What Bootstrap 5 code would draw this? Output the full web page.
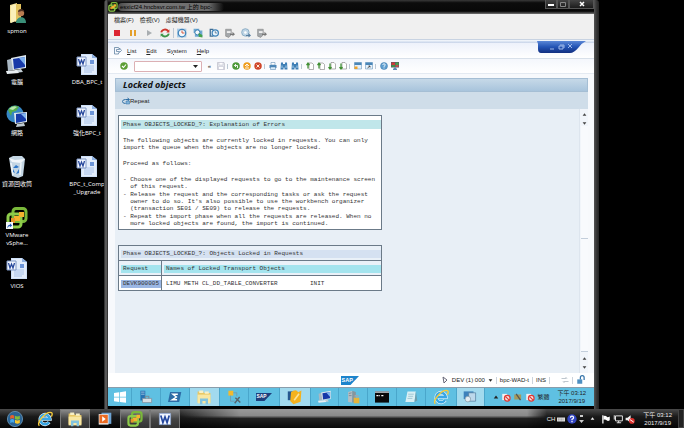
<!DOCTYPE html>
<html lang="zh-Hant">
<head>
<meta charset="utf-8">
<meta name="viewport" content="width=device-width, initial-scale=1">
<title>Locked objects</title>
<link href="https://cdn.jsdelivr.net/npm/bootstrap@5.3.0/dist/css/bootstrap.min.css" rel="stylesheet">
<style>
body{background:#000;color:#222;font:6px/8px "Liberation Sans","Noto Sans CJK TC",sans-serif;overflow:hidden}
button,a.sapm,a.vmm{font:inherit;color:inherit;background:none;border:0;padding:0;text-decoration:none}
svg{display:block;flex:none}
.minh0{min-height:0}
.i8{width:8px;height:8px}.i10{width:10px;height:10px}.i14{width:14px;height:14px}.i16{width:16px;height:16px}.i22{width:22px;height:22px}
/* desktop */
.desk{width:104px;flex:none;display:grid;grid-template-columns:34px 34px;column-gap:36px;grid-auto-rows:51px;padding-top:3px;overflow:hidden;align-content:start}
.dicon{color:#fff;display:flex;flex-direction:column;align-items:center;text-align:center;text-decoration:none;white-space:nowrap;font-family:"Open Sans","Noto Sans CJK TC",sans-serif}
.dicon span{margin-top:2px}
.c1{grid-column:1}.c2{grid-column:2}
/* remote window */
.win{background:linear-gradient(90deg,#222,#6a6a6a 50%,#222) left/4px 100% no-repeat,linear-gradient(90deg,#555,#3a3a3a 40%,#222) right/5px 100% no-repeat,#000;padding:0 5px 3px 4px;min-width:0;margin-right:85px;border-radius:3px 3px 0 0}
.tbar{height:14px;background:linear-gradient(#3a3a3a,#0c0c0c 20%,#080808 80%,#777)}
.tbar .cap{background:linear-gradient(90deg,#4a4a4a,#777 15%,#6c6c6c 85%,#5c5c5c00);border-radius:4px;color:#000;padding:0 12px 0 2px;white-space:nowrap}
.wb button{height:9px;width:12px;border:1px solid #555;border-top:0;background:linear-gradient(#444,#1c1c1c);display:flex;align-items:center;justify-content:center}
.wb button:last-child{width:25px}
.vmbar{background:#f0f0f0;padding-left:6px}
.vmbar.m{height:12px;gap:6px}
.vmbar.t{height:13px;padding-left:1px}
.vmbar.t button{width:16px;display:flex;justify-content:center}
.vmbar.t i,.sapt i{width:1px;height:10px;background:#bcc8d4;margin:0}
.strip{height:4px;background:linear-gradient(#a9b9cf,#f4f7fc 30%,#dfe7f4 60%,#c6d2e8)}
.sapmenu{height:16px;background:linear-gradient(#edf1fb,#fff);padding-left:6px;gap:10px;border-bottom:1px solid #d8e0ea}
.sapmenu svg{margin-right:-5px}
.sapt{height:15px;background:linear-gradient(#f4f7fc,#fff);padding-left:10px;border-bottom:1px solid #e4eaf2}
.sapt button{width:11px;display:flex;justify-content:center}
.sapt i{margin:0 2px 0 1px;height:5px}
.cmd{width:68px;height:11px;border:1px solid #dcb0b4;background:#fff;margin:0 2px 0 5px;font:inherit;padding:0 3px;appearance:none;border-radius:1px}
.cmdbox{position:relative}
.cmdbox svg{position:absolute;right:6px;top:4px}
.body1{background:#f7f9fc;padding:4px 6px 0 7px}
.ttl{height:14px;background:linear-gradient(#c6d9e8,#a8c4dc);border:1px solid #a5bed4;font:italic 700 9px/12px "Open Sans",sans-serif;color:#111;padding-left:7px;margin:0}
.app{height:17px;background:#cfdde9;padding-left:7px}
.content{background:#e8eff6;min-height:0}
.mono{font:6px/7px "Liberation Mono",monospace;color:#333;white-space:pre}
.msg{width:57%;border:1px solid #6b7a88;background:#fff;padding:4px 0 1px 2px;margin:6px 0 15px 3px}
.msg h2{font:inherit;line-height:9px;background:#c0e6ea;margin:0 0 8px;padding-left:2px}
.msg p,.msg ul{margin:0 0 9px;padding-left:2px}
.msg ul{list-style:none;margin:0}
.msg li{margin-bottom:1px}
.obj{width:57%;margin-left:3px;border-collapse:collapse;background:#fff}
.obj th,.obj td{font-weight:400;border:1px solid #6b7a88;height:15px;padding:1px 0 0 2px;background:#eaf1f8;text-align:left}
.obj span{display:block;line-height:8px;padding-left:2px}
.obj .hb{background:#d5e1f1}.obj .hc{background:#a4e4ee}.obj .sel{background:#9bb7e4}
.obj td{background:#fff}
.obj tr>*:first-child:not([colspan]){width:43px}
.sbar{width:9px;background:#f1f5fa;border-left:1px solid #dde5ee;padding:3px 0;color:#444}
.thumb{border:1px solid #c3cedb;border-width:0 0 1px;background:#f8fafd;width:7px}
.stat{height:14px;background:#fff;color:#222}
.stat i{width:1px;height:7px;background:#ccd3dc}
.stat .sinfo{gap:3px}
.tabs-blue{position:absolute;right:13px;top:41px}
.itask{height:19px;background:#5fc0e2;border-top:1px solid #8a9dab}
.itask button{height:18px;display:flex;align-items:center;justify-content:center;border-right:1px solid #4aa6cb}
.itask .winb{width:24px}
.itask .on{background:#a2daee}
.tray{gap:2px}
.clock{text-align:center;line-height:8px;white-space:nowrap}
.itask .clock{margin:0 8px}
.otask .clock{margin:0 6px 0 8px}
.otask{height:19px;background:linear-gradient(#4a4a4a,#1a1a1a 40%,#050505);color:#eee}
.otask .glass{align-self:stretch;background:linear-gradient(#9a9a9a,#8a8a8a 35%,#222 50%,#0a0a0a);-webkit-mask:linear-gradient(90deg,#0000,#000 60px calc(100% - 20px),#0000)}
.otask button{width:30px;height:19px;display:flex;align-items:center;justify-content:center}
.otask button.on{background:linear-gradient(#888,#444 50%,#333);border:1px solid #777;border-width:1px 1px 0}
.edge{width:6px;align-self:stretch;border:1px solid #444;background:#222}
</style>
<script src="https://cdn.jsdelivr.net/npm/bootstrap@5.3.0/dist/js/bootstrap.bundle.min.js"></script>
</head>
<body class="d-flex flex-column vh-100">
<svg width="0" height="0" class="position-absolute" aria-hidden="true"><defs>
<symbol id="folder" viewBox="0 0 22 22"><path d="M4 2l7-2v17l-7 3z" fill="#f5e39a"/><path d="M9 1h6v15l-6 3z" fill="#e3c35e"/><path d="M5 3l5-2v17l-5 2z" fill="#fbf0b8"/><circle cx="15" cy="10" r="3.2" fill="#b87c50"/><path d="M12 9c0-4 6-4 6 0l-2-1z" fill="#4d3020"/><path d="M10 20c0-7 10-8 10 0z" fill="#3a8f78"/></symbol>
<symbol id="pc" viewBox="0 0 22 22"><path d="M1 6l7-2v12l-6 1z" fill="#a9b7c2"/><path d="M5 4l15-3v13L7 16z" fill="#dde7ee"/><path d="M7 5l12-2v10L8 15z" fill="#1638a8"/><path d="M13 4l6-1v8z" fill="#7fb2f0"/><path d="M9 16l6-1 2 3-9 1z" fill="#c3cdd4"/><path d="M0 17l11-1 2 3-12 1z" fill="#e8eef2"/></symbol>
<symbol id="net" viewBox="0 0 22 22"><circle cx="9" cy="9" r="8.5" fill="#3687c4"/><path d="M2 5c3-5 8-5 11-3l-3 4-4 1-1 4zM9 9l5-2 2 5-4 5z" fill="#55ad4c"/><path d="M3 4q4-4 8-2l-4 3z" fill="#b8e6ae"/><path d="M8 8l13-1v10l-12 2z" fill="#dbe6ee"/><path d="M10 9l10-1v8l-10 2z" fill="#173ca8"/><path d="M15 9l5-1v6z" fill="#83b6ef"/><path d="M11 19l7-1 1 3-9 1z" fill="#bfcbd2"/></symbol>
<symbol id="bin" viewBox="0 0 22 22"><path d="M3 2l4-2 9 0 3 3-2 17-5 2-6-2z" fill="#c4d6e4"/><path d="M3 2l6 2 10-1-4 4-9-1z" fill="#f1f6fa"/><path d="M5 7l2 12M15 7l-1 12" stroke="#eef5fa" stroke-width="1.5"/><path d="M7 12l3-3 3 2-2 1zM13 13v4l-3 1zM7 13l2 4-2-1z" fill="#2f77c8"/></symbol>
<symbol id="doc" viewBox="0 0 22 22"><path d="M5 0h11l5 4v17H5z" fill="#cfe0f7"/><path d="M6 1h9l5 4v15H6z" fill="#e3edfb"/><path d="M16 0l5 4h-5z" fill="#8eb0e0"/><path d="M8 12h10M8 14h10M8 16h10M8 18h8" stroke="#9cb8e4" stroke-width=".8"/><path d="M14 6h4v4h-4z" fill="#6d95d8"/><path d="M1 3h9v9H1z" fill="#f6f9ff" stroke="#7d95c4"/><path d="M2.500 5l1.500 5 1.500-4 1.500 4 1.500-5" fill="none" stroke="#27489c" stroke-width="1.300"/></symbol>
<symbol id="vm" viewBox="0 0 22 22"><rect x="7" y="1.500" width="13" height="13" rx="3" fill="none" stroke="#79b83a" stroke-width="3"/><rect x="2" y="7" width="13" height="13" rx="3" fill="none" stroke="#8dcb4a" stroke-width="3"/><path d="M8 9h5V5h5v5h-4v4H8z" fill="#f4b22e"/><path d="M5 11h4v5H5z" fill="#e3962a"/></symbol>
<symbol id="cut" viewBox="0 0 8 8"><path d="M0 0h8v8H0z" fill="#f4f8fb"/><path d="M1.500 7q0-4 3-4V1.500L7 4 4.500 6V4.500Q3 4.500 1.500 7z" fill="#1d54b4"/></symbol>
<symbol id="ok" viewBox="0 0 16 16"><circle cx="8" cy="8" r="7.500" fill="#5c9e35"/><path d="M4 8l3 3 5-6" fill="none" stroke="#fff" stroke-width="2.200"/></symbol>
<symbol id="back" viewBox="0 0 16 16"><circle cx="8" cy="8" r="7.500" fill="#4f9a3b"/><path d="M11 12V7H5m3-3L5 7l3 3" fill="none" stroke="#fff" stroke-width="1.800"/></symbol>
<symbol id="exit" viewBox="0 0 16 16"><circle cx="8" cy="8" r="7.500" fill="#ef9d1d"/><path d="M4 8l4-4 4 4M8 5v5M4 12h8" fill="none" stroke="#fff" stroke-width="1.800"/></symbol>
<symbol id="cancel" viewBox="0 0 16 16"><circle cx="8" cy="8" r="7.500" fill="#cf4528"/><path d="M5 5l6 6M11 5l-6 6" stroke="#ffe9d8" stroke-width="2"/></symbol>
<symbol id="print" viewBox="0 0 16 16"><path d="M4 1h8v5H4z" fill="#fff" stroke="#4a7ca8"/><path d="M1 6h14v6H1z" fill="#4d87b8"/><path d="M3 10h10v5H3z" fill="#d9ebf8" stroke="#4a7ca8"/></symbol>
<symbol id="find" viewBox="0 0 16 16"><path d="M2 1h4v3h4V1h4l1 14H9v-4H7v4H1z" fill="#3f7fb5"/><path d="M3 7h2v5H3zM11 7h2v5h-2z" fill="#a8d0ee"/></symbol>
<symbol id="page" viewBox="0 0 16 16"><path d="M6 2h6l3 3v10H6z" fill="#fff" stroke="#666"/><path d="M4 13V3M1 6l3-4 3 4" fill="none" stroke="#3f8f32" stroke-width="2.500"/></symbol>
<symbol id="paged" viewBox="0 0 16 16"><path d="M6 1h6l3 3v10H6z" fill="#fff" stroke="#666"/><path d="M4 3v10M1 10l3 4 3-4" fill="none" stroke="#3f8f32" stroke-width="2.500"/></symbol>
<symbol id="winA" viewBox="0 0 16 16"><path d="M1 1h14v13H1z" fill="#e4f0fa" stroke="#5589b4"/><path d="M1 1h14v5H1z" fill="#4a86b8"/><path d="M1 9h6v5H1z" fill="#f2a326"/></symbol>
<symbol id="winB" viewBox="0 0 16 16"><path d="M1 1h14v13H1z" fill="#e4f0fa" stroke="#5589b4"/><path d="M1 1h14v5H1z" fill="#4a86b8"/><path d="M5 12l5-4M7 8h3v3" fill="none" stroke="#333" stroke-width="1.500"/></symbol>
<symbol id="help" viewBox="0 0 16 16"><circle cx="8" cy="8" r="7" fill="#5f9fd0" stroke="#3b77a8"/><path d="M5.500 6q0-2.500 2.500-2.500T10.500 6Q10.500 7.500 8 8.500V10M8 11v2" fill="none" stroke="#fff" stroke-width="1.600"/></symbol>
<symbol id="mon" viewBox="0 0 16 16"><path d="M0 0h16v11H0z" fill="#556"/><path d="M1 1h7v5H1z" fill="#d03a38"/><path d="M9 1h6v5H9z" fill="#49a04c"/><path d="M1 6h7v4H1z" fill="#3e8e48"/><path d="M9 6h6v4H9z" fill="#c0504a"/><path d="M6 11h4v2h2v3H4v-3h2z" fill="#5d8ab2"/></symbol>
<symbol id="save" viewBox="0 0 16 16"><path d="M1 1h13l1 2v12H1z" fill="#e5e8eb" stroke="#aab"/><path d="M4 1h8v5H4zM3 9h10v6H3z" fill="#fff" stroke="#bbc"/></symbol>
<symbol id="clk" viewBox="0 0 16 16"><path d="M0 1h15v14H0z" fill="#a8cbe6"/><circle cx="8" cy="8" r="6" fill="#f2f8fc" stroke="#3f83b8" stroke-width="2"/><path d="M8 4v4h4" fill="none" stroke="#d45034" stroke-width="1.500"/></symbol>
<symbol id="gear" viewBox="0 0 16 16"><path d="M1 1h9v3h5v10H3V8H1z" fill="#6fa9d2"/><circle cx="7" cy="7" r="4" fill="#f2f8fc" stroke="#387cae" stroke-width="1.500"/><path d="M9 14V8l6 3v4z" fill="#44a14a"/></symbol>
<symbol id="snap" viewBox="0 0 16 16"><path d="M2 1v13M1 2h6M1 13h6" fill="none" stroke="#3f6d94" stroke-width="2"/><circle cx="10" cy="8" r="5" fill="#eaf5fc" stroke="#3f83b8" stroke-width="2"/><path d="M10 5v3h3" fill="none" stroke="#335577"/></symbol>
<symbol id="dev" viewBox="0 0 16 16"><path d="M1 2h9v9l-4 4-5-2z" fill="#a4a8ab" stroke="#888"/><path d="M3 5h6v3H3z" fill="#eee"/><path d="M8 9h4V6l4 4-4 3v-2H8z" fill="#777"/></symbol>
<symbol id="cd" viewBox="0 0 16 16"><circle cx="7" cy="7" r="6" fill="#bdd4e5" stroke="#6d96b4"/><circle cx="7" cy="7" r="2" fill="#fff"/><path d="M8 11h4V8l4 4-4 3v-2H8z" fill="#567ea0"/></symbol>
<symbol id="re" viewBox="0 0 16 16"><path d="M2 7a6 5.500 0 0 1 11-2" fill="none" stroke="#cd362c" stroke-width="3"/><path d="M14 9a6 5.500 0 0 1-11 2" fill="none" stroke="#3d9649" stroke-width="3"/><path d="M15 2v5h-5z" fill="#cd362c"/><path d="M1 14V9h5z" fill="#3d9649"/></symbol>
<symbol id="expl" viewBox="0 0 20 20"><path d="M2 3h7l1 2h8v12H2z" fill="#e8c866"/><path d="M4 2h5v3H4zM11 3h5v3h-5z" fill="#f7f0c8"/><path d="M2 7h16v11H2z" fill="#f8e7a2"/><path d="M5 19v-7h10v7h-3v-4H8v4z" fill="#82c4df"/></symbol>
<symbol id="ie" viewBox="0 0 20 20"><path d="M15 14a6 6 0 1 1 1-4H5" fill="none" stroke="#eaf7fd" stroke-width="4.600"/><path d="M15 14a6 6 0 1 1 1-4H5" fill="none" stroke="#38a6e4" stroke-width="3"/><path d="M3 18.500C-1 15 11 0 18 2q2 1 0 5" fill="none" stroke="#f6cc3a" stroke-width="1.700"/></symbol>
<symbol id="sap" viewBox="0 0 36 18"><path d="M0 0h36L19 18H0z" fill="#1c84cc"/><text x="1" y="12" font-family="Liberation Sans" font-weight="700" font-size="11" fill="#fff">SAP</text></symbol>
<symbol id="word" viewBox="0 0 20 20"><path d="M2 2h16v16H2z" fill="#f0f5ff" stroke="#8da7d8"/><path d="M4 5l3 10 3-8 3 8 3-10" fill="none" stroke="#24479e" stroke-width="2.400"/></symbol>
<symbol id="lockp" viewBox="0 0 16 16"><path d="M7 7V4q0-3 3-3t3 3v4" fill="none" stroke="#3674a9" stroke-width="2"/><path d="M2 7h8v7H2z" fill="#4e8fc1"/></symbol>
<symbol id="noo" viewBox="0 0 16 16"><path d="M2 3h8v10H2z" fill="#f2f2f2"/><circle cx="10" cy="10" r="4.500" fill="#f6e4e2" stroke="#e13a35" stroke-width="2"/><path d="M7 7l6 6" stroke="#e13a35" stroke-width="2"/></symbol>
<symbol id="up" viewBox="0 0 8 8"><path d="M1 6l3-4 3 4z" fill="currentColor"/></symbol>
<symbol id="dn" viewBox="0 0 8 8"><path d="M1 2l3 4 3-4z" fill="currentColor"/></symbol>
</defs></svg>

<main class="d-flex flex-grow-1 minh0">
<nav class="desk" aria-label="桌面">
<a class="dicon c1" href="#"><svg class="i22"><use href="#folder"/></svg><span>spmon</span></a>
<a class="dicon c1" href="#"><svg class="i22"><use href="#pc"/></svg><span>電腦</span></a>
<a class="dicon c2" href="#"><svg class="i22"><use href="#doc"/></svg><span>DBA_BPC_t</span></a>
<a class="dicon c1" href="#"><svg class="i22"><use href="#net"/></svg><span>網路</span></a>
<a class="dicon c2" href="#"><svg class="i22"><use href="#doc"/></svg><span>強化BPC_t</span></a>
<a class="dicon c1" href="#"><svg class="i22"><use href="#bin"/></svg><span>資源回收筒</span></a>
<a class="dicon c2" href="#"><svg class="i22"><use href="#doc"/></svg><span>BPC_t_Comp<br>_Upgrade</span></a>
<a class="dicon c1" href="#"><svg class="i22" viewBox="0 0 22 22"><use href="#vm" width="22" height="22"/><use href="#cut" y="15" width="7" height="7"/></svg><span>VMware<br>vSphe...</span></a>
<a class="dicon c1" href="#"><svg class="i22"><use href="#doc"/></svg><span>VIOS</span></a>
</nav>

<section class="win flex-grow-1 d-flex flex-column position-relative">
<header class="tbar d-flex align-items-center flex-shrink-0"><svg class="i10"><use href="#vm"/></svg><span class="cap">esxicf24.hncbsvr.com.tw 上的 bpc-</span>
<div class="wb d-flex ms-auto align-self-start"><button aria-label="Minimize"><svg width="6" height="4"><path d="M0 2h6v2H0z" fill="#fff"/></svg></button><button aria-label="Maximize"><svg width="6" height="5"><path d="M.5.500h5v4h-5z" fill="none" stroke="#888"/></svg></button><button aria-label="Close"><svg width="6" height="6"><path d="M1 1l4 4M5 1l-4 4" stroke="#fff" stroke-width="1.500"/></svg></button></div></header>
<div class="vmbar m d-flex align-items-center flex-shrink-0"><a class="vmm" href="#">檔案(F)</a><a class="vmm" href="#">檢視(V)</a><a class="vmm" href="#">虛擬機器(V)</a></div>
<div class="vmbar t d-flex align-items-center flex-shrink-0">
<button aria-label="Stop"><svg class="i8"><path d="M1 1h6v6H1z" fill="#dc2632"/></svg></button><button aria-label="Pause"><svg class="i8"><path d="M1 1h2v6H1zM5 1h2v6H5z" fill="#e4a02c"/></svg></button><button aria-label="Play"><svg class="i8"><path d="M2 1l5 3-5 3z" fill="#a9aeb1"/></svg></button><button aria-label="Restart"><svg class="i10"><use href="#re"/></svg></button><i></i>
<button aria-label="Snapshot"><svg class="i10"><use href="#clk"/></svg></button><button aria-label="Revert"><svg class="i10"><use href="#gear"/></svg></button><button aria-label="Manage"><svg class="i10"><use href="#snap"/></svg></button><button aria-label="Floppy"><svg class="i10"><use href="#dev"/></svg></button><button aria-label="CD"><svg class="i10"><use href="#cd"/></svg></button><button aria-label="USB"><svg class="i10"><use href="#dev"/></svg></button></div>
<div class="strip flex-shrink-0"></div>
<div class="sapmenu d-flex align-items-center flex-shrink-0"><svg class="i8" viewBox="0 0 16 16"><path d="M9 3V1H1v13h8v-3M5 5h6V2l4 5-4 4V9H5z" fill="none" stroke="#5b7d9d" stroke-width="1.500"/></svg>
<a class="sapm" href="#"><u>L</u>ist</a><a class="sapm" href="#"><u>E</u>dit</a><a class="sapm" href="#">S<u>y</u>stem</a><a class="sapm" href="#"><u>H</u>elp</a></div>
<div class="sapt d-flex align-items-center flex-shrink-0"><button aria-label="Enter"><svg class="i8"><use href="#ok"/></svg></button>
<div class="cmdbox"><input class="cmd d-block" type="text" aria-label="Command"><svg width="5" height="4"><path d="M0 0h5L2.500 3z" fill="#222"/></svg></div>
<button aria-label="Collapse">«</button><button aria-label="Save"><svg class="i8"><use href="#save"/></svg></button><i></i>
<button aria-label="Back"><svg class="i8"><use href="#back"/></svg></button><button aria-label="Exit"><svg class="i8"><use href="#exit"/></svg></button><button aria-label="Cancel"><svg class="i8"><use href="#cancel"/></svg></button><i></i>
<button aria-label="Print"><svg class="i8"><use href="#print"/></svg></button><button aria-label="Find"><svg class="i8"><use href="#find"/></svg></button><button aria-label="Find next"><svg class="i8"><use href="#find"/></svg></button><i></i>
<button aria-label="First page"><svg class="i8"><use href="#page"/></svg></button><button aria-label="Previous page"><svg class="i8"><use href="#page"/></svg></button><button aria-label="Next page"><svg class="i8"><use href="#paged"/></svg></button><button aria-label="Last page"><svg class="i8"><use href="#paged"/></svg></button><i></i>
<button aria-label="New session"><svg class="i8"><use href="#winA"/></svg></button><button aria-label="Shortcut"><svg class="i8"><use href="#winB"/></svg></button><i></i>
<button aria-label="Help"><svg class="i8"><use href="#help"/></svg></button><button aria-label="Layout"><svg class="i8"><use href="#mon"/></svg></button></div>
<svg class="tabs-blue" width="49" height="13"><defs><linearGradient id="bg" x2="0" y2="1"><stop stop-color="#5a86d6"/><stop offset=".5" stop-color="#2353b4"/><stop offset="1" stop-color="#122f80"/></linearGradient></defs><path d="M0 0h49q-4 2-7 6-5 6-9 6H4q-3 0-3-4V3z" fill="url(#bg)"/><path d="M13 8h4M22 5h4v3h-4zM23 4h4v3M31 3l4 4M35 3l-4 4" fill="none" stroke="#9fb9ea"/></svg>
<div class="body1 flex-grow-1 d-flex flex-column minh0">
<h1 class="ttl flex-shrink-0">Locked objects</h1>
<div class="app d-flex align-items-center flex-shrink-0"><button class="d-flex align-items-center"><svg class="i8" viewBox="0 0 16 16"><path d="M14 5H7q-6 0-6 4t6 4M11 2l4 3-4 3" fill="none" stroke="#2e6ea4" stroke-width="2"/><path d="M8 8h7v6H8z" fill="#7fb1d8" stroke="#2e6ea4"/></svg>Repeat</button></div>
<div class="content flex-grow-1 d-flex"><div class="flex-grow-1">
<article class="msg mono"><h2>Phase OBJECTS_LOCKED_?: Explanation of Errors</h2><p>The following objects are currently locked in requests. You can only
import the queue when the objects are no longer locked.</p><p>Proceed as follows:</p><ul><li>- Choose one of the displayed requests to go to the maintenance screen
  of this request.</li><li>- Release the request and the corresponding tasks or ask the request
  owner to do so. It's also possible to use the workbench organizer
  (transaction SE01 / SE09) to release the requests.</li><li>- Repeat the import phase when all the requests are released. When no
  more locked objects are found, the import is continued.</li></ul></article>
<table class="obj mono"><thead><tr><th colspan="2"><span class="hb">Phase OBJECTS_LOCKED_?: Objects Locked in Requests</span></th></tr><tr><th><span class="hc">Request</span></th><th><span class="hc">Names of Locked Transport Objects</span></th></tr></thead><tbody><tr><td><span class="sel">DEVK900005</span></td><td><span>LIMU METH CL_DD_TABLE_CONVERTER         INIT</span></td></tr></tbody></table>
</div>
<div class="sbar d-flex flex-column align-items-center"><svg width="5" height="5"><use href="#up"/></svg><svg class="mt-1" width="5" height="5"><use href="#dn"/></svg><div class="thumb flex-fill"></div><div class="thumb flex-fill mb-1"></div><svg width="5" height="5"><use href="#up"/></svg><svg class="mt-1" width="5" height="5"><use href="#dn"/></svg></div></div>
</div>
<footer class="stat d-flex align-items-center flex-shrink-0"><div class="col-6 ms-2 d-flex justify-content-end"><svg width="18" height="9"><use href="#sap"/></svg></div>
<div class="sinfo d-flex align-items-center ms-auto text-nowrap pe-2"><svg class="i8" viewBox="0 0 8 8"><path d="M2 1l4 3-3 3z" fill="none" stroke="#667"/></svg><span>DEV (1) 000</span><svg width="5" height="5"><use href="#dn"/></svg><i></i><span>bpc-WAD-t</span><i></i><span>INS</span><i class="me-2"></i><svg class="i8" viewBox="0 0 16 16"><path d="M1 5h10M5 11h10M9 2l3 3M7 14l-3-3" stroke="#aab4be" stroke-width="1.500"/></svg><i></i><svg class="i10"><use href="#lockp"/></svg></div></footer>
<div class="itask d-flex align-items-center flex-shrink-0">
<button class="winb" aria-label="Start"><svg width="12" height="12" viewBox="0 0 16 16"><path d="M0 2.500l7-1v6H0zM8 1.500l8-1.200v7.200H8zM0 8.500h7v6l-7-1zM8 8.500h8v7.200L8 14.500z" fill="#fff"/></svg></button>
<button class="flex-fill" aria-label="Server Manager"><svg class="i14" viewBox="0 0 20 20"><path d="M2 1h7v14H2z" fill="#2673b4"/><path d="M3 3h5M3 6h5" stroke="#cde"/><path d="M5 12h13v6H5z" fill="#d6dee4" stroke="#7b8b98"/><path d="M9 12v-3h5v3" fill="none" stroke="#7b8b98" stroke-width="1.500"/></svg></button>
<button class="flex-fill" aria-label="PowerShell"><svg class="i14" viewBox="0 0 20 20"><path d="M3 3h16l-3 14H0z" fill="#2c6ca6"/><path d="M14 6H7l5 4-6 4h7" fill="none" stroke="#fff" stroke-width="2"/></svg></button>
<button class="flex-fill on" aria-label="Explorer"><svg class="i16"><use href="#expl"/></svg></button>
<button class="flex-fill" aria-label="Configuration"><svg class="i14" viewBox="0 0 20 20"><path d="M2 1h7v7H2z" fill="#f3b92f"/><path d="M5 8v8h6M9 4h5v5" fill="none" stroke="#7b909e"/><path d="M12 11l7 7M18 10l-7 9" stroke="#57646d" stroke-width="2"/></svg></button>
<button class="flex-fill" aria-label="SAP Logon"><svg width="16" height="8" viewBox="0 0 36 18"><path d="M0 0h36L19 18H0z" fill="#1d3f7c"/><text x="1" y="12" font-family="Liberation Sans" font-weight="700" font-size="11" fill="#fff">SAP</text></svg></button>
<button class="flex-fill on" aria-label="SAP GUI"><svg class="i16" viewBox="0 0 20 20"><path d="M1 3h9v11H1z" fill="#26588f"/><path d="M5 4q6-5 9 0l4-2-1 14-9 3-4-4z" fill="#f4b21d"/><path d="M9 14l6-8" stroke="#fbe39a" stroke-width="2"/></svg></button>
<button class="flex-fill" aria-label="Computer"><svg class="i14"><use href="#pc"/></svg></button>
<button class="flex-fill" aria-label="Services"><svg class="i14" viewBox="0 0 20 20"><path d="M3 3l6-2v17l-6-1z" fill="#b6bec3"/><path d="M9 1l5 2v15H9z" fill="#87949b"/><path d="M4 5l4-1M4 8h4" stroke="#678"/><path d="M11 11h8v8h-8z" fill="#e5b53c"/><path d="M13 11V8h4v3" fill="none" stroke="#9ea8ad" stroke-width="1.500"/></svg></button>
<button class="flex-fill" aria-label="Command Prompt"><svg class="i14" viewBox="0 0 20 16"><path d="M0 0h20v16H0z" fill="#090909"/><path d="M0 0h20v2H0z" fill="#c9ced2"/><path d="M2 6h3M6 6h1M9 6h3" stroke="#fff" stroke-width="1.500"/></svg></button>
<button class="flex-fill" aria-label="Notepad"><svg class="i14" viewBox="0 0 20 20"><path d="M5 2h12l-2 15H2z" fill="#daf0f5"/><path d="M17 2l2 13-4 2z" fill="#6d9ead"/><path d="M6 6h8M6 9h7M5 12h7" stroke="#88b7c6"/></svg></button>
<button class="flex-fill" aria-label="Internet Explorer"><svg class="i16"><use href="#ie"/></svg></button>
<button class="flex-fill on" aria-label="Control Panel"><svg class="i14" viewBox="0 0 20 20"><path d="M1 2h14v11H1z" fill="#3d82bb"/><path d="M8 4h10v12H8z" fill="#bdd8eb" stroke="#517c9e"/><circle cx="7" cy="13" r="4" fill="#e4edf2" stroke="#7e96a5"/></svg></button>
<div class="tray d-flex align-items-center ms-2"><svg width="6" height="6"><use href="#up"/></svg><svg class="i10"><use href="#noo"/></svg><svg class="i10" viewBox="0 0 16 16"><path d="M2 4h11v8H2z" fill="#a59a5c"/><path d="M5 3l7 10" stroke="#555" stroke-width="2"/></svg><svg class="i10"><use href="#noo"/></svg><span class="text-nowrap">繁體</span></div><div class="clock">下午 03:12<br>2017/9/19</div></div>
</section>
</main>

<footer class="otask d-flex align-items-center flex-shrink-0">
<button aria-label="開始" class="me-n1"><svg class="i16" viewBox="0 0 20 20"><circle cx="10" cy="10" r="9.500" fill="#2b6393" stroke="#6d9bbc"/><path d="M4 6q3-2 5 0v4q-2-2-5 0z" fill="#e9602c"/><path d="M10 6q3 2 6 0v4q-3 2-6 0z" fill="#83bd35"/><path d="M4 11q3-2 5 0v4q-2-2-5 0z" fill="#47a8e8"/><path d="M10 11q3 2 6 0v4q-3 2-6 0z" fill="#f8c82e"/></svg></button>
<button aria-label="Internet Explorer"><svg class="i16"><use href="#ie"/></svg></button><button class="on" aria-label="檔案總管"><svg class="i16"><use href="#expl"/></svg></button><button aria-label="Media Player"><svg class="i14" viewBox="0 0 20 20"><path d="M5 1h14v16H5z" fill="#6ea3d2"/><path d="M1 3h14v15H1z" fill="#efefef"/><path d="M2 4h12v12H2z" fill="#ea6a22"/><path d="M6 6l5 4-5 4z" fill="#fff"/></svg></button><button class="on" aria-label="vSphere"><svg class="i16"><use href="#vm"/></svg></button><button class="on" aria-label="Word"><svg class="i14"><use href="#word"/></svg></button>
<div class="glass flex-grow-1"></div>
<div class="tray d-flex align-items-center"><span>CH</span><svg class="i8" viewBox="0 0 16 16"><path d="M0 5h16v8H0z" fill="#ddd"/><path d="M2 8h12M2 10h12" stroke="#777" stroke-dasharray="2 1"/></svg><svg class="i10" viewBox="0 0 16 16"><circle cx="8" cy="8" r="7.500" fill="#3245c2"/><path d="M5.500 6q0-2.500 2.500-2.500T10.500 6Q10.500 7.500 8 8.500V10M8 11v2" fill="none" stroke="#fff" stroke-width="2"/></svg><svg width="5" height="10"><path d="M1 1h3v2H1zM0 6h5L2.500 9z" fill="#ccc"/></svg><svg class="mx-1" width="5" height="5"><use href="#up"/></svg><svg class="i10" viewBox="0 0 16 16"><path d="M3 2v13" stroke="#fff" stroke-width="2"/><path d="M4 3q4-1 5 1t5 0v6q-3 2-5 0T4 9z" fill="#fff"/></svg><svg class="i10" viewBox="0 0 16 16"><path d="M4 3h11v8H4zM9 11v3M6 14h7M2 2v7" fill="none" stroke="#eee" stroke-width="1.500"/></svg><svg class="i10" viewBox="0 0 16 16"><path d="M1 6h3l5-4v12l-5-4H1z" fill="#eee"/><circle cx="11" cy="11" r="4.500" fill="#e0322e"/><path d="M8 9l6 4" stroke="#fff" stroke-width="1.500"/></svg></div>
<div class="clock">下午 03:12<br>2017/9/19</div><div class="edge"></div>
</footer>
</body>
</html>
